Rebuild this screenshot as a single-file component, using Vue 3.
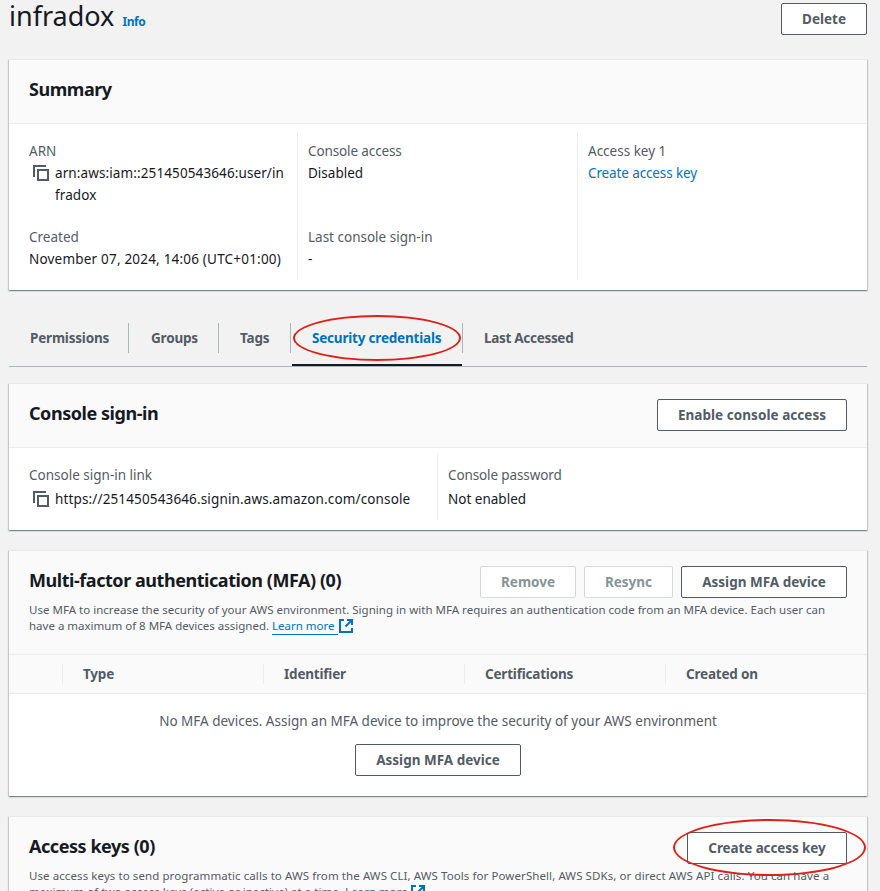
<script setup>
import { h } from 'vue'

const tabs = ['Permissions', 'Groups', 'Tags', 'Security credentials', 'Last Accessed']
const activeTab = 'Security credentials'
const columns = ['Type', 'Identifier', 'Certifications', 'Created on']

const CopyIcon = () =>
  h('svg', { width: 16, height: 16, viewBox: '0 0 16 16', fill: 'none', stroke: '#545b64', 'stroke-width': 2 }, [
    h('path', { d: 'M1 12V1H13' }),
    h('path', { d: 'M5 5H15V15H5Z' })
  ])

const ExternalIcon = () =>
  h('svg', { width: 14, height: 14, viewBox: '0 0 14 14', fill: 'none', stroke: '#0073bb', 'stroke-width': 2 }, [
    h('path', { d: 'M5 1H1V13H13V9' }),
    h('path', { d: 'M8 1H13V6M13 1L6.5 7.5' })
  ])
</script>

<template>
  <div class="page">
    <header class="page-header">
      <div class="heading">
        <h1>infradox</h1>
        <a class="info">Info</a>
      </div>
      <button class="btn delete">Delete</button>
    </header>

    <section class="panel summary">
      <div class="panel-header"><h2>Summary</h2></div>
      <div class="summary-body">
        <div class="col">
          <div class="field first">
            <div class="label">ARN</div>
            <div class="value copy"><CopyIcon class="copy-icon" /><span class="arn">arn:aws:iam::251450543646:user/in<br />fradox</span></div>
          </div>
          <div class="field">
            <div class="label">Created</div>
            <div class="value date">November 07, 2024, 14:06 (UTC+01:00)</div>
          </div>
        </div>
        <div class="col">
          <div class="field first">
            <div class="label tight">Console access</div>
            <div class="value">Disabled</div>
          </div>
          <div class="field">
            <div class="label">Last console sign-in</div>
            <div class="value">-</div>
          </div>
        </div>
        <div class="col">
          <div class="field">
            <div class="label">Access key 1</div>
            <a class="value link tight">Create access key</a>
          </div>
        </div>
      </div>
    </section>

    <nav class="tabs">
      <div v-for="tab in tabs" :key="tab" class="tab" :class="{ active: tab === activeTab }">
        <span class="tab-label">{{ tab }}</span>
        <i v-if="tab === activeTab" class="ring tab-ring"></i>
      </div>
    </nav>

    <section class="panel signin">
      <div class="panel-header">
        <h2>Console sign-in</h2>
        <button class="btn enable">Enable console access</button>
      </div>
      <div class="signin-body">
        <div class="col">
          <div class="label">Console sign-in link</div>
          <div class="value copy"><CopyIcon class="copy-icon" /><span class="url">https://251450543646.signin.aws.amazon.com/console</span></div>
        </div>
        <div class="col">
          <div class="label tight">Console password</div>
          <div class="value">Not enabled</div>
        </div>
      </div>
    </section>

    <section class="panel mfa">
      <div class="mfa-header">
        <div class="title-row">
          <h2>Multi-factor authentication (MFA) (0)</h2>
          <div class="actions">
            <button class="btn remove" disabled>Remove</button>
            <button class="btn resync" disabled>Resync</button>
            <button class="btn assign">Assign MFA device</button>
          </div>
        </div>
        <p class="description">
          <span class="mfa-one">Use MFA to increase the security of your AWS environment. Signing in with MFA requires an authentication code from an MFA device. Each user can</span><br />
          <span>have a maximum of 8 MFA devices assigned. </span><a class="learn">Learn more</a><ExternalIcon class="ext-icon" />
        </p>
      </div>
      <div class="table-head">
        <div class="cell"></div>
        <div v-for="column in columns" :key="column" class="cell">{{ column }}</div>
      </div>
      <div class="empty">
        <div class="empty-text">No MFA devices. Assign an MFA device to improve the security of your AWS environment</div>
        <button class="btn assign">Assign MFA device</button>
      </div>
    </section>

    <section class="panel keys">
      <div class="mfa-header">
        <div class="title-row">
          <h2>Access keys (0)</h2>
          <div class="ring-anchor">
            <button class="btn create">Create access key</button>
            <i class="ring key-ring"></i>
          </div>
        </div>
        <p class="description">
          <span class="key-one">Use access keys to send programmatic calls to AWS from the AWS CLI, AWS Tools for PowerShell, AWS SDKs, or direct AWS API calls. You can have a</span><br />
          <span class="key-two">maximum of two access keys (active or inactive) at a time. </span><a class="learn">Learn more</a><ExternalIcon class="ext-icon" />
        </p>
      </div>
    </section>
  </div>
</template>

<style>
body {
  margin: 0;
  background: #f2f2f2;
}
</style>

<style scoped>
* {
  box-sizing: border-box;
}
.page {
  width: 880px;
  height: 891px;
  overflow: hidden;
  padding: 0 13px 0 9px;
  background: #f2f2f2;
  color: #16191f;
  font-family: 'Noto Sans', 'Open Sans', sans-serif;
  font-size: 13.5px;
  line-height: 22px;
  white-space: nowrap;
}
.page-header {
  height: 59px;
  display: flex;
  justify-content: space-between;
  padding-top: 3px;
}
.heading {
  display: flex;
  align-items: baseline;
  height: 30px;
  margin-top: -1px;
  gap: 8px;
}
h1 {
  margin: 0;
  font-size: 27px;
  line-height: 28px;
  font-weight: 400;
  letter-spacing: 0;
}
.info {
  color: #0073bb;
  font-size: 12px;
  font-weight: 700;
  letter-spacing: -0.4px;
}
h2 {
  margin: 0;
  font-size: 18px;
  line-height: 22px;
  font-weight: 700;
  letter-spacing: -0.45px;
}
.btn {
  height: 32px;
  flex: none;
  padding: 0;
  border: 1px solid #545b64;
  border-radius: 2px;
  background: #fff;
  color: #545b64;
  font: 700 13.5px/20px 'Noto Sans', 'Open Sans', sans-serif;
  white-space: nowrap;
}
.btn:disabled {
  border-color: #d5dbdb;
  color: #879596;
}
.delete { width: 86px; }
.enable { width: 190px; letter-spacing: 0.05px; }
.remove { width: 96px; }
.resync { width: 89px; }
.assign { width: 166px; }
.create { width: 160px; letter-spacing: -0.1px; }
.panel {
  width: 858px;
  background: #fff;
  border-top: 1px solid #e9ebeb;
  box-shadow: 0 1px 1px 0 rgba(0, 28, 36, 0.3), 1px 1px 1px 0 rgba(0, 28, 36, 0.15), -1px 1px 1px 0 rgba(0, 28, 36, 0.15);
}
.panel-header {
  display: flex;
  justify-content: space-between;
  height: 64px;
  padding: 15px 20px 0;
  background: #fafafa;
  border-bottom: 1px solid #eaeded;
}
.panel-header h2 {
  margin-top: 3px;
}
.summary {
  height: 231px;
}
.summary-body {
  display: grid;
  grid-template-columns: 289px 280px 1fr;
  height: 156px;
  padding-top: 7px;
}
.summary-body .col {
  height: 149px;
  padding: 9px 0 0 10px;
  border-right: 1px solid #eaeded;
}
.summary-body .col:first-child {
  padding-left: 20px;
}
.summary-body .col:last-child {
  border-right: 0;
}
.field.first {
  height: 86px;
}
.label {
  color: #545b64;
}
.tight {
  letter-spacing: -0.12px;
}
.value {
  display: block;
}
.date {
  letter-spacing: 0.2px;
}
.arn {
  letter-spacing: 0.11px;
}
.url {
  letter-spacing: 0.14px;
}
.link {
  color: #0073bb;
}
.copy {
  display: flex;
  gap: 6px;
  padding-left: 4px;
}
.copy-icon {
  flex: none;
  margin-top: 3px;
}
.tabs {
  display: flex;
  align-items: flex-start;
  width: 858px;
  height: 77px;
  margin-bottom: 16px;
  padding-top: 33px;
  border-bottom: 1px solid #aab7b8;
}
.tab {
  position: relative;
  height: 30px;
  padding: 4px 0 0 22px;
  border-right: 1px solid #aab7b8;
  color: #545b64;
  font-weight: 700;
  letter-spacing: -0.2px;
}
.tab:nth-child(1) { width: 120px; padding-left: 21px; }
.tab:nth-child(2) { width: 90px; }
.tab:nth-child(3) { width: 72px; padding-left: 21px; }
.tab:nth-child(4) { width: 172px; padding-left: 21px; }
.tab:nth-child(5) { width: 140px; border-right: 0; padding-left: 21px; letter-spacing: -0.3px; }
.tab.active {
  color: #0073bb;
}
.tab.active::after {
  content: '';
  position: absolute;
  left: 1px;
  top: 41px;
  width: 170px;
  height: 2px;
  background: #16191f;
}
.ring {
  position: absolute;
  border: 2px solid #df2018;
  border-radius: 50%;
  pointer-events: none;
}
.tab-ring {
  left: 2px;
  top: -8px;
  width: 168px;
  height: 46px;
}
.signin {
  height: 147px;
  margin-bottom: 20px;
}
.signin-body {
  display: grid;
  grid-template-columns: 429px 1fr;
  padding-top: 6px;
}
.signin-body .col {
  height: 66px;
  padding: 10px 0 0 10px;
}
.signin-body .col:first-child {
  padding-left: 20px;
  border-right: 1px solid #eaeded;
}
.signin-body .value {
  margin-top: 2px;
}
.mfa {
  height: 246px;
  margin-bottom: 20px;
}
.mfa-header {
  height: 104px;
  padding: 15px 20px 0;
  background: #fafafa;
  border-bottom: 1px solid #eaeded;
}
.title-row {
  display: flex;
  justify-content: space-between;
  height: 36px;
}
.title-row h2 {
  margin-top: 3px;
}
.actions {
  display: flex;
  gap: 8px;
}
.description {
  margin: 0;
  color: #545b64;
  font-size: 11.5px;
  line-height: 16px;
}
.mfa-one {
  letter-spacing: 0.02px;
}
.key-one {
  letter-spacing: 0.085px;
}
.key-two {
  letter-spacing: 0.04px;
}
.learn {
  display: inline-block;
  height: 17px;
  padding-right: 3px;
  border-bottom: 1px solid #0073bb;
  color: #0073bb;
}
.ext-icon {
  margin-left: 1px;
  vertical-align: -3px;
}
.table-head {
  display: grid;
  grid-template-columns: 54px 201px 201px 201px 201px;
  height: 39px;
  padding-top: 9px;
  background: #fafafa;
  border-bottom: 1px solid #eaeded;
}
.cell {
  height: 20px;
  padding-left: 20px;
  border-right: 1px solid #eaeded;
  color: #545b64;
  font-weight: 700;
  line-height: 20px;
  letter-spacing: -0.2px;
}
.cell:last-child {
  border-right: 0;
}
.empty {
  display: flex;
  flex-direction: column;
  align-items: center;
  padding-top: 16px;
  color: #545b64;
}
.empty-text {
  margin-bottom: 12px;
}
.ring-anchor {
  position: relative;
}
.key-ring {
  left: -14px;
  top: -13px;
  width: 193px;
  height: 57px;
}
</style>
